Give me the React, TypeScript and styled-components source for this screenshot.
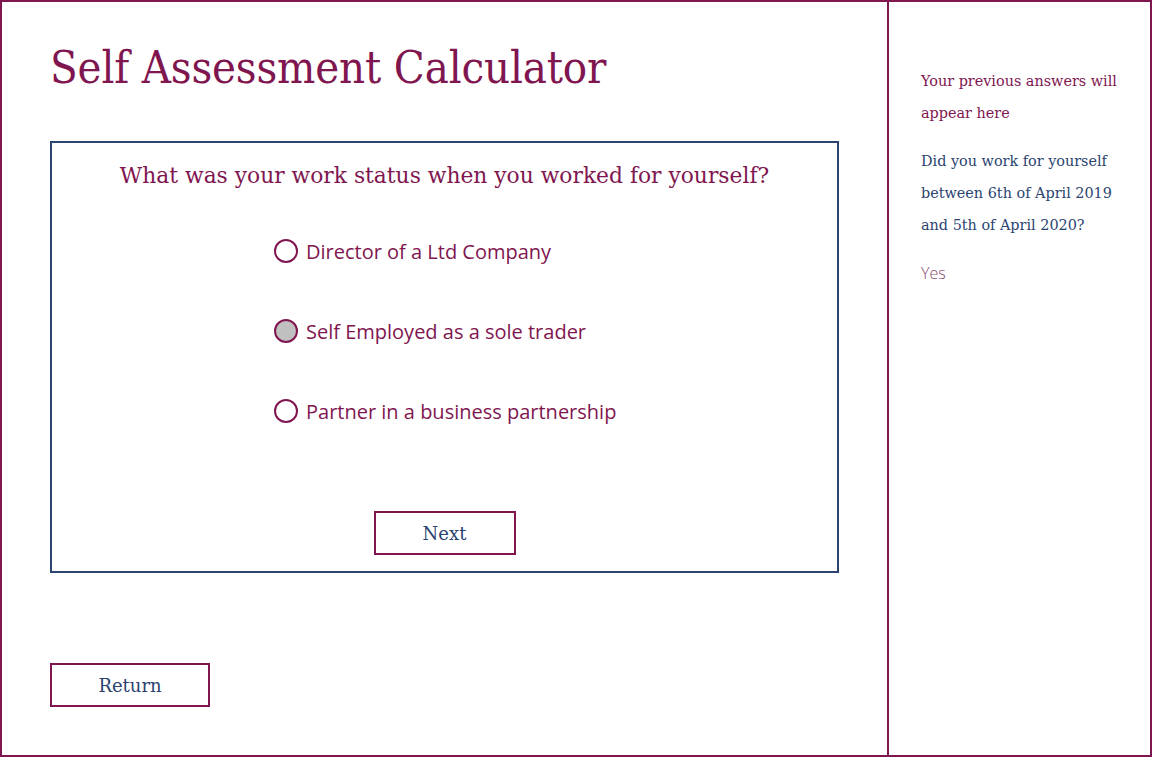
import { useState } from "react";
import styled, { createGlobalStyle } from "styled-components";

const maroon = "#7f1650";
const navy = "#2b4470";
const slab = `"DejaVu Serif", "Liberation Serif", serif`;
const sans = `"Open Sans", "Noto Sans", sans-serif`;

const GlobalStyle = createGlobalStyle`
  html, body {
    margin: 0;
    padding: 0;
    background: #fff;
  }
  * {
    box-sizing: border-box;
  }
`;

const Page = styled.div`
  width: 1152px;
  height: 757px;
  border: 2px solid ${maroon};
  display: grid;
  grid-template-columns: 887px 1fr;
`;

const Main = styled.main`
  border-right: 2px solid ${maroon};
  padding: 38px 0 0 48px;
  display: flex;
  flex-direction: column;
`;

const Title = styled.h1`
  margin: 0;
  font-family: ${slab};
  font-weight: normal;
  font-stretch: semi-condensed;
  font-size: 45px;
  line-height: 56px;
  letter-spacing: -0.15px;
  color: ${maroon};
`;

const Card = styled.section`
  width: 789px;
  height: 432px;
  margin-top: 45px;
  border: 2px solid ${navy};
  display: flex;
  flex-direction: column;
  align-items: center;
  padding-top: 18px;
`;

const Question = styled.h2`
  margin: 0;
  font-family: ${slab};
  font-weight: normal;
  font-size: 21.8px;
  line-height: 30px;
  color: ${maroon};
`;

const Options = styled.div`
  display: flex;
  flex-direction: column;
  gap: 56px;
  margin-top: 48px;
  width: 341px;
`;

const Option = styled.label`
  display: flex;
  align-items: center;
  gap: 8px;
  height: 24px;
  white-space: nowrap;
  cursor: pointer;
  font-family: ${sans};
  font-size: 20px;
  font-weight: 500;
  color: ${maroon};
`;

const Dot = styled.span<{ checked: boolean }>`
  width: 24px;
  height: 24px;
  border-radius: 50%;
  border: 2px solid ${maroon};
  background: ${(p) => (p.checked ? "#c0c0c0" : "#fff")};
  flex-shrink: 0;
`;

const Button = styled.button`
  width: 142px;
  height: 44px;
  border: 2px solid ${maroon};
  background: #fff;
  font-family: ${slab};
  font-size: 18px;
  color: ${navy};
  cursor: pointer;
`;

const NextButton = styled(Button)`
  margin-top: 88px;
`;

const ReturnButton = styled(Button)`
  width: 160px;
  margin-top: 90px;
`;

const Sidebar = styled.aside`
  padding: 63px 20px 0 32px;
  font-family: ${slab};
`;

const Note = styled.p<{ tone: "maroon" | "navy" }>`
  margin: 0 0 16px;
  font-size: 14.4px;
  line-height: 32px;
  color: ${(p) => (p.tone === "maroon" ? maroon : navy)};
`;

const Answer = styled.p`
  margin: 0;
  font-family: ${sans};
  font-weight: 300;
  font-size: 16px;
  line-height: 32px;
  color: #8a4a6e;
`;

const options = [
  "Director of a Ltd Company",
  "Self Employed as a sole trader",
  "Partner in a business partnership",
];

export default function App() {
  const [selected, setSelected] = useState(1);

  return (
    <>
      <GlobalStyle />
      <Page>
        <Main>
          <Title>Self Assessment Calculator</Title>
          <Card>
            <Question>What was your work status when you worked for yourself?</Question>
            <Options>
              {options.map((o, idx) => (
                <Option key={o} onClick={() => setSelected(idx)}>
                  <Dot checked={selected === idx} />
                  {o}
                </Option>
              ))}
            </Options>
            <NextButton>Next</NextButton>
          </Card>
          <ReturnButton>Return</ReturnButton>
        </Main>
        <Sidebar>
          <Note tone="maroon">Your previous answers will appear here</Note>
          <Note tone="navy">
            Did you work for yourself between 6th of April 2019 and 5th of April 2020?
          </Note>
          <Answer>Yes</Answer>
        </Sidebar>
      </Page>
    </>
  );
}
